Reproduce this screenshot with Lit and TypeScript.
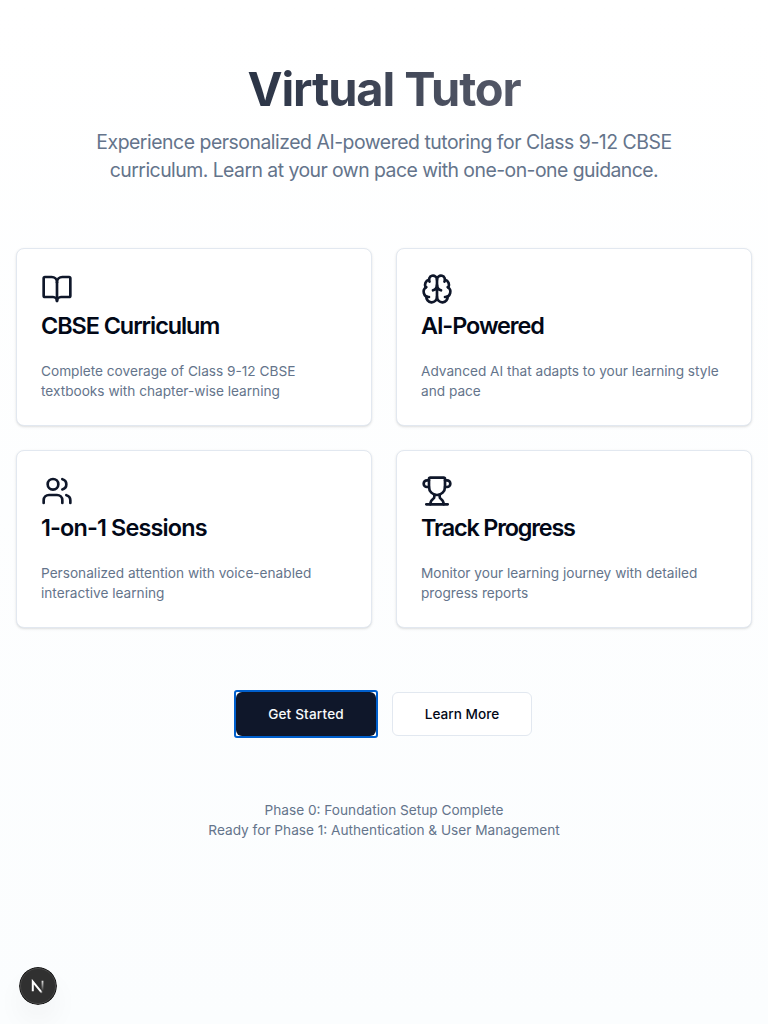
import { LitElement, html, css, svg } from "lit";
import { customElement } from "lit/decorators.js";
import { styleMap } from "lit/directives/style-map.js";

const icons = {
  book: svg`<path d="M12 7v14"/><path d="M3 18a1 1 0 0 1-1-1V4a1 1 0 0 1 1-1h5a4 4 0 0 1 4 4 4 4 0 0 1 4-4h5a1 1 0 0 1 1 1v13a1 1 0 0 1-1 1h-6a3 3 0 0 0-3 3 3 3 0 0 0-3-3z"/>`,
  brain: svg`<path d="M12 18V5"/><path d="M15 13a4.17 4.17 0 0 1-3-4 4.17 4.17 0 0 1-3 4"/><path d="M17.598 6.5A3 3 0 1 0 12 5a3 3 0 1 0-5.598 1.5"/><path d="M17.997 5.125a4 4 0 0 1 2.526 5.77"/><path d="M18 18a4 4 0 0 0 2-7.464"/><path d="M19.967 17.483A4 4 0 1 1 12 18a4 4 0 1 1-7.967-.517"/><path d="M6 18a4 4 0 0 1-2-7.464"/><path d="M6.003 5.125a4 4 0 0 0-2.526 5.77"/>`,
  users: svg`<path d="M16 21v-2a4 4 0 0 0-4-4H6a4 4 0 0 0-4 4v2"/><path d="M16 3.128a4 4 0 0 1 0 7.744"/><path d="M22 21v-2a4 4 0 0 0-3-3.87"/><circle cx="9" cy="7" r="4"/>`,
  trophy: svg`<path d="M10 14.66v1.626a2 2 0 0 1-.976 1.696A5 5 0 0 0 7 21.978"/><path d="M14 14.66v1.626a2 2 0 0 0 .976 1.696A5 5 0 0 1 17 21.978"/><path d="M18 9h1.5a1 1 0 0 0 0-5H18"/><path d="M4 22h16"/><path d="M6 9a6 6 0 0 0 12 0V3a1 1 0 0 0-1-1H7a1 1 0 0 0-1 1z"/><path d="M6 9H4.5a1 1 0 0 1 0-5H6"/>`,
};

const cards = [
  { icon: icons.book, title: "CBSE Curriculum", tracking: -1.05, text: ["Complete coverage of Class 9-12 CBSE", "textbooks with chapter-wise learning"] },
  { icon: icons.brain, title: "AI-Powered", tracking: -1.06, text: ["Advanced AI that adapts to your learning style", "and pace"] },
  { icon: icons.users, title: "1-on-1 Sessions", tracking: -0.84, text: ["Personalized attention with voice-enabled", "interactive learning"] },
  { icon: icons.trophy, title: "Track Progress", tracking: -1.2, text: ["Monitor your learning journey with detailed", "progress reports"] },
];

@customElement("app-root")
export class AppRoot extends LitElement {
  static styles = css`
    :host { display: block; font-family: Inter, sans-serif; color: #020817; }
    * { box-sizing: border-box; margin: 0; }
    .page { min-height: 1024px; padding: 64px 16px; background: linear-gradient(to bottom, #fff, #fbfdfe); }
    .head { text-align: center; margin-bottom: 64px; }
    h1 { width: max-content; margin: 0 auto 15px; padding-top: 1px; font-size: 47px; line-height: 48px; font-weight: 700; letter-spacing: -1.1px; color: transparent; background: linear-gradient(to right, #2b3446, #555968); background-clip: text; -webkit-background-clip: text; }
    .lead { font-size: 19.4px; line-height: 28px; letter-spacing: -.47px; color: #64748b; white-space: nowrap; }
    .second { letter-spacing: -.53px; }
    .grid { display: grid; grid-template-columns: 1fr 1fr; gap: 24px; margin-bottom: 64px; }
    .card { height: 178px; padding: 24px; border: 1px solid #e2e8f0; border-radius: 8px; background: #fff; box-shadow: 0 1px 3px rgba(0,0,0,.1), 0 1px 2px -1px rgba(0,0,0,.1); }
    .icon { display: block; width: 32px; height: 32px; margin-bottom: 9px; }
    h2 { font-size: 23.4px; line-height: 24px; font-weight: 600; white-space: nowrap; }
    .text { margin-top: 23px; font-size: 13.65px; line-height: 20px; color: #64748b; white-space: nowrap; }
    .actions { display: flex; justify-content: center; gap: 16px; margin-bottom: 64px; }
    .focus { display: flex; border-radius: 1px; outline: 2px solid #005fcc; background: #fff; }
    button { height: 44px; border-radius: 6px; font: 500 13.6px/20px Inter, sans-serif; padding: 0; width: 140px; color: #020817; background: #fff; border: 1px solid #e2e8f0; }
    .primary { color: #f8fafc; background: #0f172a; border: 0; letter-spacing: .16px; }
    .foot { text-align: center; font-size: 13.65px; line-height: 20px; color: #64748b; }
    .badge { position: fixed; left: 19px; bottom: 19px; width: 38px; height: 38px; border-radius: 50%; box-shadow: 0 16px 32px -8px rgba(0,0,0,.12); }
  `;

  render() {
    return html`<main class="page">
      <header class="head">
        <h1>Virtual Tutor</h1>
        <p class="lead">Experience personalized AI-powered tutoring for Class 9-12 CBSE<br /><span class="second">curriculum. Learn at your own pace with one-on-one guidance.</span></p>
      </header>
      <section class="grid">
        ${cards.map((c) => html`<article class="card">
          <svg class="icon" viewBox="0 0 24 24" fill="none" stroke="#0f172a" stroke-width="2" stroke-linecap="round" stroke-linejoin="round">${c.icon}</svg>
          <h2 style=${styleMap({ letterSpacing: `${c.tracking}px` })}>${c.title}</h2>
          <p class="text">${c.text[0]}<br />${c.text[1]}</p>
        </article>`)}
      </section>
      <div class="actions"><span class="focus"><button class="primary">Get Started</button></span><button>Learn More</button></div>
      <footer class="foot"><p>Phase 0: Foundation Setup Complete</p><p>Ready for Phase 1: Authentication &amp; User Management</p></footer>
      <svg class="badge" viewBox="0 0 38 38" fill="none">
        <defs>
          <linearGradient id="a" gradientUnits="userSpaceOnUse" x1="19" y1="20" x2="24" y2="26"><stop stop-color="#fff"/><stop offset=".6" stop-color="#fff"/><stop offset="1" stop-color="#fff" stop-opacity="0"/></linearGradient>
          <linearGradient id="b" gradientUnits="userSpaceOnUse" x1="23" y1="14" x2="23" y2="24"><stop stop-color="#fff" stop-opacity=".85"/><stop offset="1" stop-color="#fff" stop-opacity="0"/></linearGradient>
        </defs>
        <circle cx="19" cy="19" r="19" fill="#171717"/>
        <circle cx="19" cy="19" r="17.5" fill="#303030" stroke="#4a4a4a"/>
        <path d="M13.8 24.2V14.6L23 25.8" stroke="url(#a)" stroke-width="2"/>
        <path d="M23.5 13.8v10" stroke="url(#b)" stroke-width="1.8"/>
      </svg>
    </main>`;
  }
}
